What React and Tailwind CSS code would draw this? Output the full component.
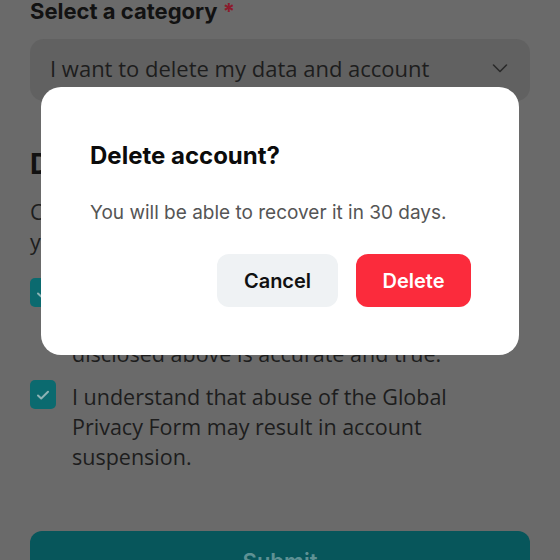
import React from "react";

function CheckBox() {
  return (
    <div className="w-[26px] h-[29px] shrink-0 rounded-[5px] bg-[#0b6a6f] flex items-center justify-center">
      <svg width="16" height="16" viewBox="0 0 16 16" fill="none">
        <path d="M3 8.5l3.2 3L13 4.8" stroke="#8db3b5" strokeWidth="2" strokeLinecap="round" strokeLinejoin="round" />
      </svg>
    </div>
  );
}

export default function App() {
  const bgFont = { fontFamily: '"Open Sans", "Noto Sans", sans-serif' };
  const uiFont = { fontFamily: 'Inter, "Liberation Sans", Arial, sans-serif' };
  return (
    <div className="relative w-[560px] h-[560px] overflow-hidden bg-[#6a6a6a]" style={bgFont}>
      <div className="px-[30px] -mt-[3px] text-[#1d1d1d]">
        <div className="text-[22px] font-bold leading-[28px] text-[#121212]" style={uiFont}>
          Select a category <span className="text-[#8c1b2c]">*</span>
        </div>
        <div className="mt-[14px] h-[62px] rounded-[14px] bg-[#616161] flex items-center justify-between pl-[20px] pr-[20px] pb-[4px]">
          <span className="text-[22px] leading-[30px] text-[#1d1d1d]">I want to delete my data and account</span>
          <svg width="20" height="20" viewBox="0 0 20 20" fill="none">
            <path d="M3.5 7l6.5 6.5L16.5 7" stroke="#2a2a2a" strokeWidth="1.6" strokeLinecap="round" strokeLinejoin="round" />
          </svg>
        </div>
        <div className="mt-[46px] text-[28px] font-bold leading-[34px] text-[#111]" style={uiFont}>Delete my data</div>
        <div className="mt-[16px] text-[21.5px] leading-[30px]">
          Confirm the following statements before<br />you submit your request.
        </div>
        <div className="mt-[21px] flex gap-[16px]">
          <CheckBox />
          <div className="text-[21.5px] leading-[30px] mt-[1px]">
            I confirm that all the information that I<br />have provided and the information<br />disclosed above is accurate and true.
          </div>
        </div>
        <div className="mt-[11px] flex gap-[16px]">
          <CheckBox />
          <div className="text-[21.5px] leading-[30px] mt-[2px]">
            I understand that abuse of the Global<br />Privacy Form may result in account<br />suspension.
          </div>
        </div>
        <div className="mt-[59px] h-[60px] rounded-[12px] bg-[#07565b] flex items-start justify-center pt-[14px]">
          <span className="text-[22px] font-semibold text-[#5e9194]" style={uiFont}>Submit</span>
        </div>
      </div>

      <div className="absolute left-[41px] top-[87px] w-[478px] h-[268px] rounded-[20px] bg-white pt-[54px] pl-[49px] pr-[48px]" style={uiFont}>
        <div className="text-[24px] font-bold leading-[30px] text-[#0b0b0b]">Delete account?</div>
        <div className="mt-[29px] text-[19px] leading-[26px] text-[#555555]">You will be able to recover it in 30 days.</div>
        <div className="mt-[28px] flex justify-end gap-[18px]">
          <button className="w-[121px] h-[53px] rounded-[12px] bg-[#eff2f4] text-[20px] font-semibold text-[#111]">Cancel</button>
          <button className="w-[115px] h-[53px] rounded-[12px] bg-[#fb2b3c] text-[20px] font-semibold text-white">Delete</button>
        </div>
      </div>
    </div>
  );
}
